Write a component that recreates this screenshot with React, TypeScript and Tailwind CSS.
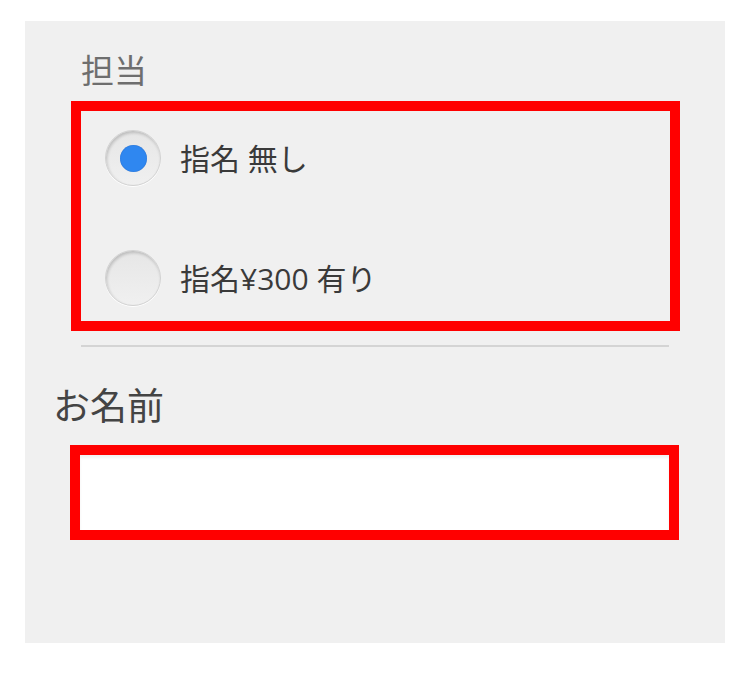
const font = { fontFamily: '"Open Sans", "Noto Sans CJK JP", sans-serif' };

const Radio = ({ checked }: { checked?: boolean }) => (
  <span className="relative flex h-[56px] w-[56px] shrink-0 items-center justify-center rounded-full border border-[#d2d2d2] bg-gradient-to-b from-[#e6e6e6] to-[#f0f0f0] shadow-[inset_1px_2px_3px_rgba(0,0,0,0.18),0_1px_0_#ffffff]">
    {checked && (
      <span className="h-[27px] w-[27px] rounded-full bg-[#2f87f0] shadow-[inset_0_0_1px_rgba(0,40,120,0.5)]" />
    )}
  </span>
);

const App = () => {
  return (
    <div className="min-h-screen bg-white pt-[21px] pl-[25px]" style={font}>
      <div className="w-[700px] h-[622px] bg-[#f0f0f0] pt-[30px]">
        <div className="pl-[56px] text-[33px] leading-[40px] text-[#6e6e6e]">担当</div>

        <div className="ml-[46px] mt-[10px] w-[609px] h-[230px] border-[10px] border-[#ff0000] pl-[24px] pt-[17px]">
          <div className="flex h-[60px] items-center gap-[19px]">
            <Radio checked />
            <span className="text-[30px] text-[#3a3a3a]">指名 無し</span>
          </div>
          <div className="mt-[60px] flex h-[60px] items-center gap-[19px]">
            <Radio />
            <span className="text-[30px] text-[#3a3a3a]">指名¥300 有り</span>
          </div>
        </div>

        <div className="ml-[56px] mt-[14px] w-[588px] h-[2px] bg-[#d4d4d4]" />

        <div className="pl-[28px] mt-[37px] text-[37px] leading-[44px] text-[#444444]">お名前</div>

        <div className="ml-[45px] mt-[17px] w-[609px] h-[95px] border-[10px] border-[#ff0000]">
          <div className="h-full w-full bg-white shadow-[inset_0_3px_3px_rgba(0,0,0,0.06)]" />
        </div>
      </div>
    </div>
  );
};

export default App;
